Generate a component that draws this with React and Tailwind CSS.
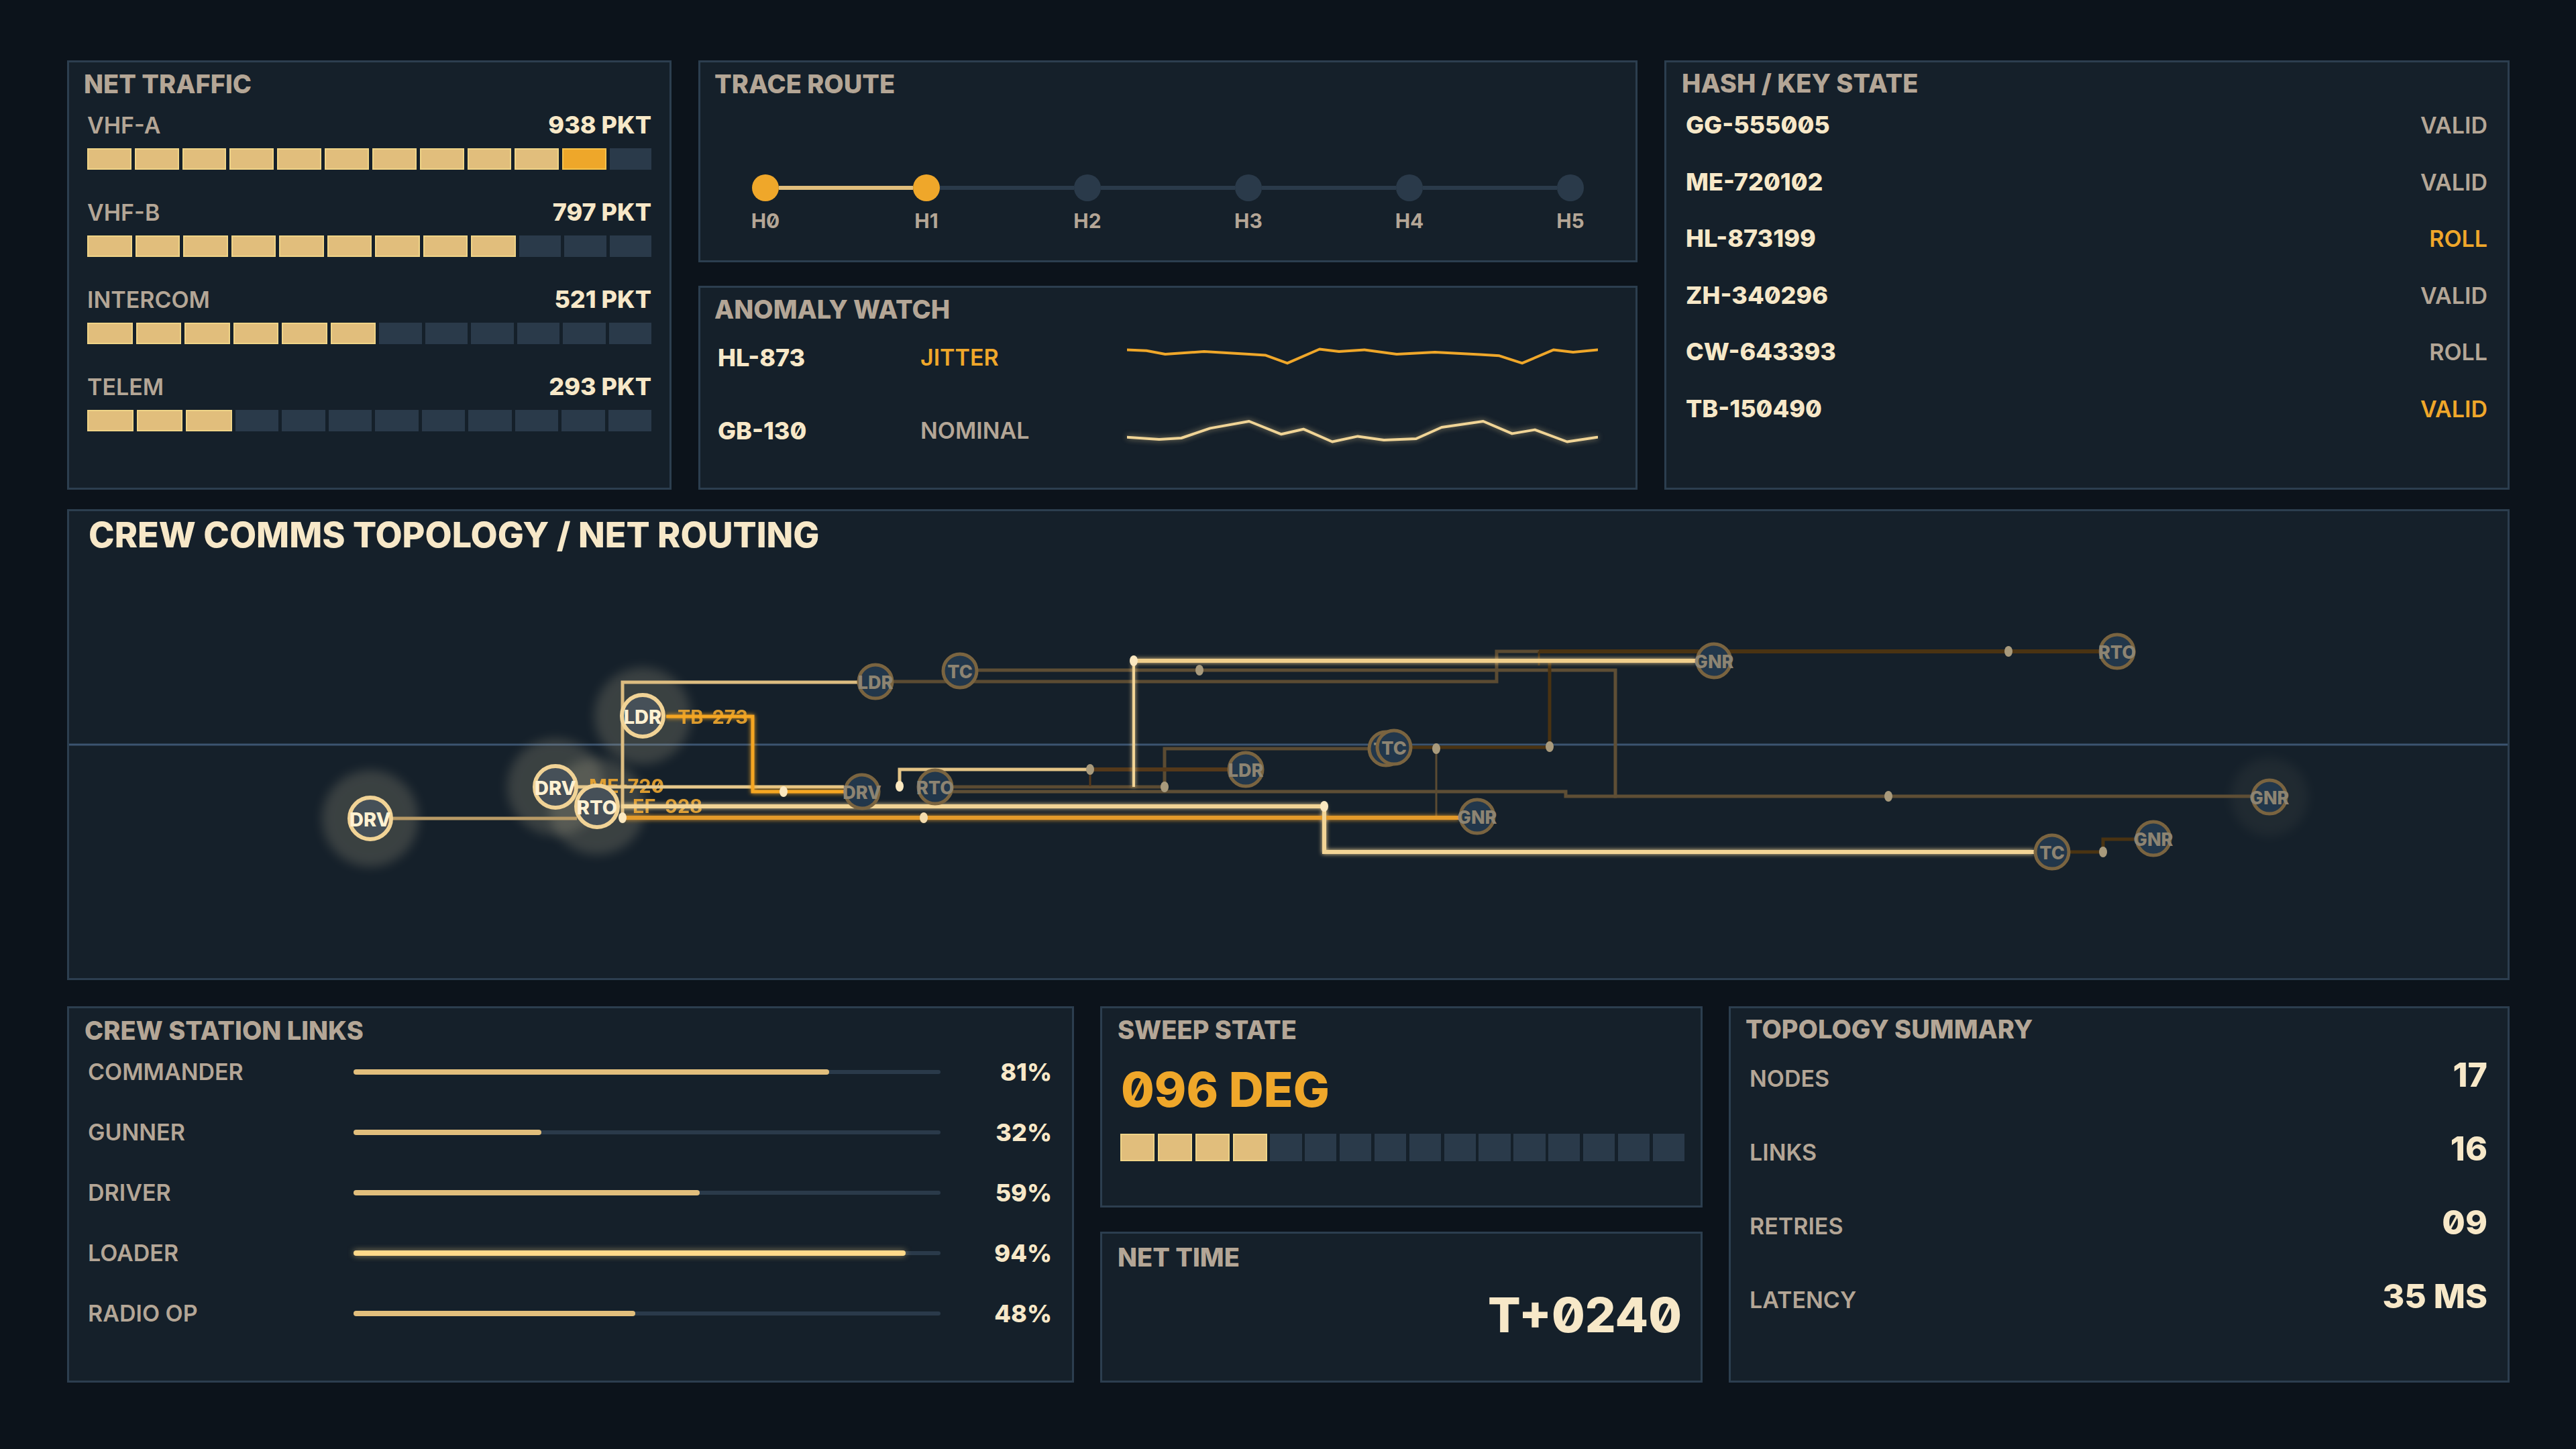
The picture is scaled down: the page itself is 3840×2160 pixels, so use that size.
import React from 'react'

const heading = 'text-[38px] leading-none font-extrabold text-[#b4a696]'

const Panel = ({ className = '', children }) => (
  <div className={`border-[3px] border-[#2c3e4f] bg-[#15202a] ${className}`}>{children}</div>
)

const traffic = [
  { name: 'VHF-A', value: '938 PKT', fill: 10, peak: true },
  { name: 'VHF-B', value: '797 PKT', fill: 9 },
  { name: 'INTERCOM', value: '521 PKT', fill: 6 },
  { name: 'TELEM', value: '293 PKT', fill: 3 },
]

const keys = [
  { id: 'GG-555005', state: 'VALID', hot: false },
  { id: 'ME-720102', state: 'VALID', hot: false },
  { id: 'HL-873199', state: 'ROLL', hot: true },
  { id: 'ZH-340296', state: 'VALID', hot: false },
  { id: 'CW-643393', state: 'ROLL', hot: false },
  { id: 'TB-150490', state: 'VALID', hot: true },
]

const links = [
  { name: 'COMMANDER', pct: 81 },
  { name: 'GUNNER', pct: 32 },
  { name: 'DRIVER', pct: 59 },
  { name: 'LOADER', pct: 94, hot: true },
  { name: 'RADIO OP', pct: 48 },
]

const summary = [
  { name: 'NODES', value: '17' },
  { name: 'LINKS', value: '16' },
  { name: 'RETRIES', value: '09' },
  { name: 'LATENCY', value: '35 MS' },
]

const jitterPts = [
  [0, 5.4], [29, 6.7], [57, 12], [115, 8], [182, 12], [206, 13.4], [239, 25.4], [287, 4.5], [316, 8],
  [354, 5.4], [402, 12], [459, 9], [526, 12.5], [555, 14.3], [589, 25.4], [636, 5.4], [665, 9], [701, 5.4],
]
const nominalPts = [
  [0, 26.8], [48, 30], [81, 28], [124, 13.4], [182, 3], [230, 22.3], [263, 14.7], [306, 33.5], [344, 25.4],
  [383, 31], [431, 29], [469, 12], [531, 3], [574, 21.4], [608, 15.6], [656, 33.5], [701, 26.8],
]

const Spark = ({ pts, color, glow }) => (
  <svg width="702" height="46" viewBox="0 0 702 46" className={glow ? 'drop-shadow-[0_0_4px_rgba(240,212,150,0.6)]' : ''}>
    <polyline
      points={pts.map(([x, y]) => `${x},${y + 6}`).join(' ')}
      fill="none"
      stroke={color}
      strokeWidth="4"
      strokeLinejoin="round"
      strokeLinecap="round"
    />
  </svg>
)

const NetTraffic = () => (
  <Panel className="w-[901px] pt-[13px]">
    <div className={`${heading} pl-[22px]`}>NET TRAFFIC</div>
    <div className="mt-[24px] px-[27px] flex flex-col gap-[45px]">
      {traffic.map((row) => (
        <div key={row.name}>
          <div className="flex items-baseline justify-between leading-none">
            <span className="text-[34px] font-semibold text-[#b4a696]">{row.name}</span>
            <span className="text-[36px] font-extrabold text-[#f7e8c8]">{row.value}</span>
          </div>
          <div className="mt-[17px] flex gap-[5px]">
            {Array.from({ length: 12 }).map((_, i) => {
              const lit = i < row.fill
              const peak = row.peak && i === row.fill
              return (
                <div
                  key={i}
                  className={
                    peak
                      ? 'flex-1 h-[32px] bg-[#eea72a] border-2 border-[#f6c24c]'
                      : lit
                      ? 'flex-1 h-[32px] bg-[#e1be7c] border-2 border-[#efd487]'
                      : 'flex-1 h-[32px] bg-[#2a3a4a]'
                  }
                />
              )
            })}
          </div>
        </div>
      ))}
    </div>
  </Panel>
)

const TraceRoute = () => {
  const hops = ['H0', 'H1', 'H2', 'H3', 'H4', 'H5']
  return (
    <Panel className="h-[301px] pt-[13px]">
      <div className={`${heading} pl-[21px]`}>TRACE ROUTE</div>
      <div className="mt-[116px] px-[77px] flex">
        {hops.map((h, i) => (
          <React.Fragment key={h}>
            {i > 0 && (
              <div className={`flex-1 h-[6px] mt-[17px] ${i === 1 ? 'bg-[#e1be7c]' : 'bg-[#2a3a4a]'}`} />
            )}
            <div className="w-[40px] flex flex-col items-center">
              <div className={`w-[40px] h-[40px] rounded-full ${i < 2 ? 'bg-[#efa72a]' : 'bg-[#2a3a4a]'}`} />
              <div className="mt-[14px] text-[30px] leading-none font-bold text-[#b4a696]">{h}</div>
            </div>
          </React.Fragment>
        ))}
      </div>
    </Panel>
  )
}

const AnomalyWatch = () => (
  <Panel className="flex-1 pt-[13px]">
    <div className={`${heading} pl-[21px]`}>ANOMALY WATCH</div>
    <div className="mt-[31px] pl-[26px] flex flex-col gap-[65px]">
      <div className="h-[44px] flex items-center">
        <span className="w-[302px] text-[36px] leading-none font-extrabold text-[#f7e8c8]">HL-873</span>
        <span className="w-[308px] text-[34px] leading-none font-semibold text-[#efa72a]">JITTER</span>
        <Spark pts={jitterPts} color="#efa72a" />
      </div>
      <div className="h-[44px] flex items-center">
        <span className="w-[302px] text-[36px] leading-none font-extrabold text-[#f7e8c8]">GB-130</span>
        <span className="w-[308px] text-[34px] leading-none font-semibold text-[#b4a696]">NOMINAL</span>
        <Spark pts={nominalPts} color="#f0d496" glow />
      </div>
    </div>
  </Panel>
)

const KeyState = () => (
  <Panel className="flex-1 pt-[12px]">
    <div className={`${heading} pl-[23px]`}>HASH / KEY STATE</div>
    <div className="mt-[25px] pl-[29px] pr-[30px] flex flex-col gap-[48.5px]">
      {keys.map((k) => (
        <div key={k.id} className="flex items-baseline justify-between leading-none">
          <span className="text-[36px] font-extrabold text-[#f7e8c8]">{k.id}</span>
          <span className={`text-[34px] font-semibold ${k.hot ? 'text-[#efa72a]' : 'text-[#b4a696]'}`}>{k.state}</span>
        </div>
      ))}
    </div>
  </Panel>
)

const activeNodes = [
  { x: 552, y: 1220, t: 'DRV' },
  { x: 958, y: 1067, t: 'LDR' },
  { x: 828, y: 1173, t: 'DRV' },
  { x: 890, y: 1202, t: 'RTO' },
]

const idleNodes = [
  { x: 1305, y: 1016, t: 'LDR' },
  { x: 1431, y: 1000, t: 'TC' },
  { x: 1285, y: 1180, t: 'DRV' },
  { x: 1394, y: 1173, t: 'RTO' },
  { x: 1857, y: 1147, t: 'LDR' },
  { x: 2066, y: 1116, t: 'TC' },
  { x: 2078, y: 1114, t: 'TC' },
  { x: 2555, y: 985, t: 'GNR' },
  { x: 3156, y: 971, t: 'RTO' },
  { x: 2202, y: 1217, t: 'GNR' },
  { x: 3383, y: 1188, t: 'GNR' },
  { x: 3059, y: 1270, t: 'TC' },
  { x: 3210, y: 1250, t: 'GNR' },
]

const dots = [
  { x: 1788, y: 999, c: '#a89a7c' },
  { x: 2815, y: 1187, c: '#a89a7c' },
  { x: 2994, y: 971, c: '#a89a7c' },
  { x: 1736, y: 1173, c: '#a89a7c' },
  { x: 2141, y: 1116, c: '#a89a7c' },
  { x: 2310, y: 1113, c: '#a89a7c' },
  { x: 1625, y: 1147, c: '#a89a7c' },
  { x: 3135, y: 1270, c: '#a89a7c' },
  { x: 1341, y: 1172, c: '#fbe8c0' },
  { x: 1690, y: 985, c: '#fbe8c0' },
  { x: 1974, y: 1202, c: '#fbe8c0' },
  { x: 928, y: 1219, c: '#fbe8c0' },
  { x: 1377, y: 1219, c: '#f3dcae' },
  { x: 1168, y: 1180, c: '#fbe8c0' },
]

const Topology = () => (
  <Panel className="relative h-[702px] pt-[10px] overflow-hidden">
    <div className="pl-[29px] text-[52px] leading-none font-extrabold text-[#f7e8c8]">CREW COMMS TOPOLOGY / NET ROUTING</div>
    <svg
      className="absolute inset-0 w-full h-full"
      viewBox="103 762 3635 696"
      preserveAspectRatio="none"
      fontFamily="Inter, sans-serif"
    >
      <defs>
        <filter id="glow" x="-20%" y="-50%" width="140%" height="200%">
          <feGaussianBlur stdDeviation="3" result="b" />
          <feMerge>
            <feMergeNode in="b" />
            <feMergeNode in="SourceGraphic" />
          </feMerge>
        </filter>
        <filter id="halo" x="-50%" y="-50%" width="200%" height="200%">
          <feGaussianBlur stdDeviation="8" />
        </filter>
      </defs>

      <path d="M103 1110 H3738" stroke="#3c5470" strokeWidth="3" />

      {activeNodes.map((n, i) => (
        <circle key={i} cx={n.x} cy={n.y} r="72" fill="#cfc3a0" opacity="0.2" filter="url(#halo)" />
      ))}
      <circle cx="3383" cy="1188" r="58" fill="#cfc3a0" opacity="0.06" filter="url(#halo)" />

      <g fontSize="29" fontWeight="700" fill="#f0a830" opacity="0.9">
        <text x="1010" y="1068" dominantBaseline="central">TB-273</text>
        <text x="878" y="1171" dominantBaseline="central">ME-720</text>
        <text x="943" y="1201" dominantBaseline="central">EF-928</text>
      </g>

      <g fill="none" strokeLinejoin="miter">
        <path d="M1330 1016 H2231 V971 H2294" stroke="#5b4b32" strokeWidth="5" />
        <path d="M1458 999 H2408 V1187 H3355" stroke="#5e4e35" strokeWidth="5" />
        <path d="M1420 1173 H1736" stroke="#5b4b32" strokeWidth="5" />
        <path d="M1420 1180 H2334 V1187 H2410" stroke="#5e4e35" strokeWidth="5" />
        <path d="M1736 1173 V1116 H2050" stroke="#5b4b32" strokeWidth="5" />
        <path d="M2141 1116 V1217" stroke="#5b4b32" strokeWidth="3" />
        <path d="M2294 971 H3130" stroke="#4a3312" strokeWidth="6" />
        <path d="M2100 1114 H2310 V985" stroke="#4a3312" strokeWidth="5" />
        <path d="M2294 971 V992" stroke="#4a3312" strokeWidth="3" />
        <path d="M1625 1147 H1830" stroke="#55391a" strokeWidth="6" />
        <path d="M1625 1147 V1172" stroke="#55391a" strokeWidth="3" />
        <path d="M3085 1270 H3135 V1251 H3187" stroke="#4a3312" strokeWidth="5" />

        <path d="M584 1220 H860" stroke="#b89a66" strokeWidth="5" />
        <path d="M928 1220 V1017 H1280" stroke="#dcbc80" strokeWidth="5" />
        <path d="M860 1173 H1258" stroke="#e6c88c" strokeWidth="5" />
        <path d="M1341 1173 V1147 H1625" stroke="#e4c486" strokeWidth="5" />

        <g filter="url(#glow)">
          <path d="M928 1219 H2175" stroke="#e39a2a" strokeWidth="6" />
          <path d="M993 1068 H1122 V1180 H1262" stroke="#f5a623" strokeWidth="5" />
          <path d="M926 1202 H1974 V1270 H3032" stroke="#f3d596" strokeWidth="6" />
          <path d="M1690 1173 V985" stroke="#f3d596" strokeWidth="4" />
          <path d="M1690 985 H2528" stroke="#f0cf8c" strokeWidth="6" />
        </g>
      </g>

      {dots.map((d, i) => (
        <ellipse key={i} cx={d.x} cy={d.y} rx="6" ry="8" fill={d.c} />
      ))}

      {idleNodes.map((n, i) => (
        <g key={i}>
          <circle cx={n.x} cy={n.y} r="25" fill="#22374b" stroke="#7a6440" strokeWidth="5" />
          <text
            x={n.x}
            y={n.y + 1}
            textAnchor="middle"
            dominantBaseline="central"
            fontSize="27"
            fontWeight="800"
            fill="#8d8472"
          >
            {n.t}
          </text>
        </g>
      ))}

      {activeNodes.map((n, i) => (
        <g key={i}>
          <circle cx={n.x} cy={n.y} r="31" fill="#465058" stroke="#f1d396" strokeWidth="6" />
          <text
            x={n.x}
            y={n.y + 1}
            textAnchor="middle"
            dominantBaseline="central"
            fontSize="29"
            fontWeight="800"
            fill="#fff1d2"
          >
            {n.t}
          </text>
        </g>
      ))}

      <path d="M1072 762 V1458" stroke="#fbf1dc" strokeWidth="4" filter="url(#glow)" />
    </svg>
  </Panel>
)

const CrewLinks = () => (
  <Panel className="w-[1501px] pt-[14px]">
    <div className={`${heading} pl-[23px]`}>CREW STATION LINKS</div>
    <div className="mt-[24.5px] pl-[28px] pr-[30px] flex flex-col gap-[54px]">
      {links.map((l) => (
        <div key={l.name} className="h-[36px] flex items-center">
          <span className="w-[396px] text-[34px] leading-none font-semibold text-[#b4a696]">{l.name}</span>
          <div className="w-[875px] h-[6px] rounded-full bg-[#2a3a4a]">
            <div
              className={`h-[8px] -mt-[1px] rounded-full ${
                l.hot ? 'bg-[#ffd98a] shadow-[0_0_10px_rgba(255,217,138,0.55)]' : 'bg-[#e1be7c]'
              }`}
              style={{ width: `${l.pct}%` }}
            />
          </div>
          <span className="flex-1 text-right text-[36px] leading-none font-extrabold text-[#f7e8c8]">{l.pct}%</span>
        </div>
      ))}
    </div>
  </Panel>
)

const SweepState = () => (
  <Panel className="h-[300px] pt-[13px]">
    <div className={`${heading} pl-[23px]`}>SWEEP STATE</div>
    <div className="mt-[34px] pl-[28px] text-[72px] leading-none font-extrabold text-[#efa72a]">096 DEG</div>
    <div className="mt-[30px] pl-[27px] pr-[24px] flex gap-[4.6px]">
      {Array.from({ length: 16 }).map((_, i) => (
        <div
          key={i}
          className={
            i < 4
              ? 'flex-1 h-[41px] bg-[#e1be7c] border-2 border-[#efd487]'
              : 'flex-1 h-[41px] bg-[#2a3a4a]'
          }
        />
      ))}
    </div>
  </Panel>
)

const NetTime = () => (
  <Panel className="flex-1 pt-[16px]">
    <div className={`${heading} pl-[23px]`}>NET TIME</div>
    <div className="mt-[31px] pr-[28px] text-right text-[72px] leading-none font-extrabold text-[#f7e8c8]">T+0240</div>
  </Panel>
)

const Summary = () => (
  <Panel className="flex-1 pt-[12px]">
    <div className={`${heading} pl-[22px]`}>TOPOLOGY SUMMARY</div>
    <div className="mt-[24px] pl-[28px] pr-[30px] flex flex-col gap-[60px]">
      {summary.map((s) => (
        <div key={s.name} className="flex items-baseline justify-between leading-none">
          <span className="text-[34px] font-semibold text-[#b4a696]">{s.name}</span>
          <span className="text-[50px] font-extrabold text-[#f7e8c8]">{s.value}</span>
        </div>
      ))}
    </div>
  </Panel>
)

export default function App() {
  return (
    <div className="w-[3840px] h-[2160px] overflow-hidden bg-[#0c131b] pl-[100px] pr-[99px] pt-[90px] font-['Inter',sans-serif] slashed-zero">
      <div className="h-[640px] flex gap-[40px]">
        <NetTraffic />
        <div className="w-[1400px] flex flex-col gap-[35px]">
          <TraceRoute />
          <AnomalyWatch />
        </div>
        <KeyState />
      </div>
      <div className="mt-[29px]">
        <Topology />
      </div>
      <div className="mt-[39px] h-[561px] flex gap-[39px]">
        <CrewLinks />
        <div className="w-[898px] flex flex-col gap-[36px]">
          <SweepState />
          <NetTime />
        </div>
        <Summary />
      </div>
    </div>
  )
}
